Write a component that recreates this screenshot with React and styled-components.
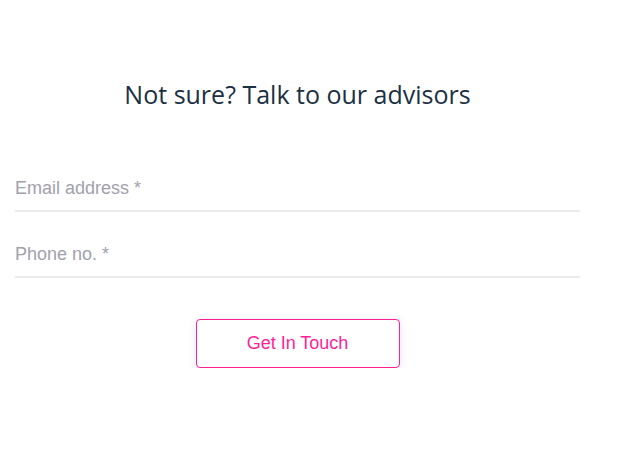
import React from "react";
import styled, { createGlobalStyle } from "styled-components";

const GlobalStyle = createGlobalStyle`
	body {
		margin: 0;
		background: #ffffff;
		font-family: "Liberation Sans", Arial, sans-serif;
	}
`;

const Container = styled.div`
	width: 565px;
	padding: 72px 0 0 15px;
`;

const Title = styled.h2`
	margin: 0 0 50px;
	text-align: center;
	font-family: "Open Sans", sans-serif;
	font-weight: 400;
	font-size: 25px;
	line-height: 44px;
	color: #1c3044;
`;

const Form = styled.form`
	display: flex;
	flex-direction: column;
`;

const Input = styled.input`
	height: 46px;
	margin-bottom: 20px;
	padding: 0;
	border: none;
	border-bottom: 2px solid #ebebeb;
	outline: none;
	background: transparent;
	font-family: "Liberation Sans", Arial, sans-serif;
	font-size: 18px;
	color: #333;
	box-sizing: border-box;

	&::placeholder {
		color: #a1a1ab;
	}
`;

const Button = styled.button`
	align-self: center;
	width: 204px;
	height: 49px;
	margin-top: 21px;
	border: 1px solid #ff1f98;
	border-radius: 4px;
	background: #fff;
	color: #ff1f98;
	font-family: "Liberation Sans", Arial, sans-serif;
	font-size: 18px;
	box-shadow: 0 2px 8px rgba(120, 130, 200, 0.2);
	cursor: pointer;
`;

const App = () => {
	return (
		<Container>
			<GlobalStyle />
			<Title>Not sure? Talk to our advisors</Title>
			<Form onSubmit={(e) => e.preventDefault()}>
				<Input type="email" placeholder="Email address *" />
				<Input type="tel" placeholder="Phone no. *" />
				<Button type="submit">Get In Touch</Button>
			</Form>
		</Container>
	);
};

export default App;
